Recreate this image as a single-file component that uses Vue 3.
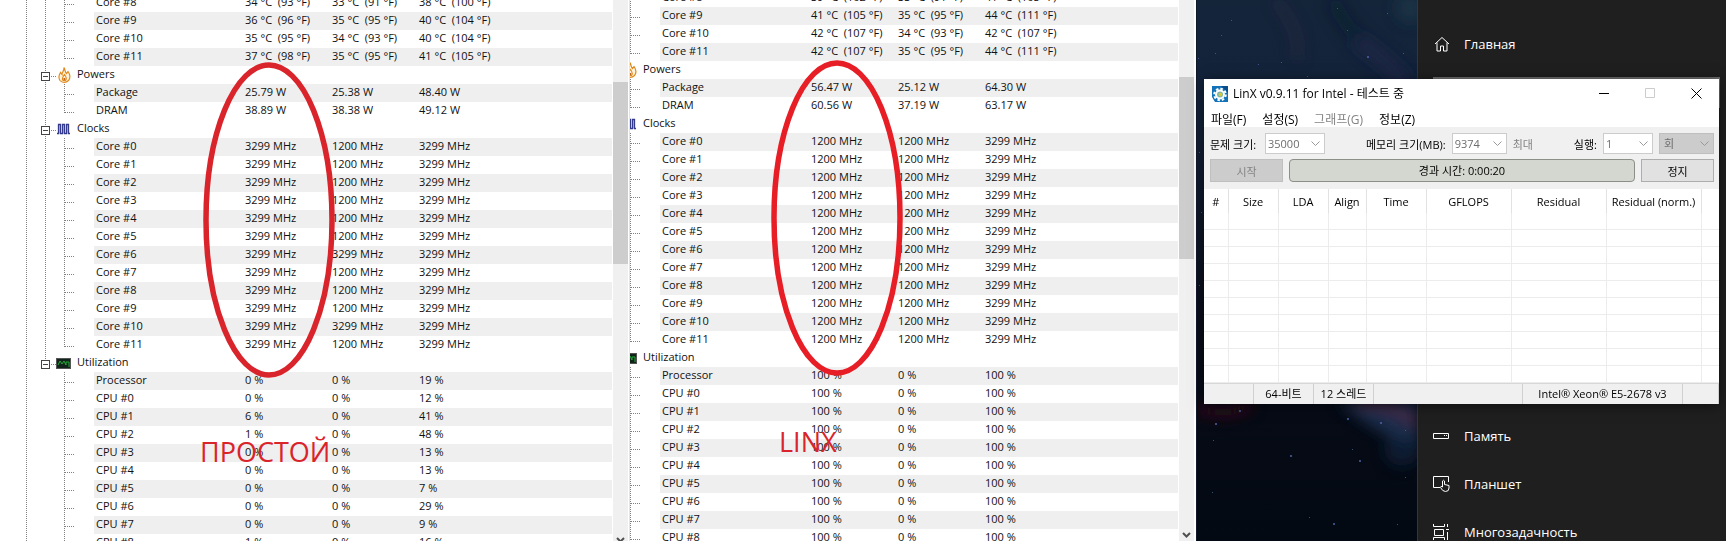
<template>
    <main class="page">
        <section class="pane" v-for="pane in panes" :key="pane.id" :class="pane.id">
            <div class="view">
                <table class="sensors">
                    <colgroup>
                        <col class="col-tree">
                        <col class="col-name">
                        <col class="col-value">
                        <col class="col-value">
                        <col>
                    </colgroup>
                    <tbody v-for="(group, groupIndex) in pane.groups" :key="groupIndex">
                        <tr v-if="group.title" class="group-row">
                            <td colspan="5">
                                <div class="group-title">
                                    <svg :width="74 - pane.crop" height="18" :viewBox="pane.crop + ' 0 ' + (74 - pane.crop) + ' 18'">
                                        <g class="guide">
                                            <path d="M26.5 0V18M51 10.5H57" />
                                            <path :d="groupIndex < pane.groups.length - 1 ? 'M45.5 0V6M45.5 16V18' : 'M45.5 0V6'" />
                                        </g>
                                        <path class="box" d="M41.5 6.5H49.5V14.5H41.5ZM43 10.5H48" />
                                        <g v-if="group.icon === 'flame'" fill="none" stroke="#e08a1e" stroke-width="1.2">
                                            <path fill="#fff3dc" d="M64 1.5C65.5 4 64.500 5.500 66.500 7.500L68 5.500C70.500 9 70.500 12 68.500 14.500C66 17 62 17 60 14.500C57.500 11 59.500 8.500 60.500 6.500L62 8.500C62 6 64.500 4.500 64 1.500Z" />
                                            <path d="M64.500 8.500C66.500 11 67 12.500 65.500 14.500H63C61.500 12.500 62.500 11 64.500 8.500Z" />
                                            <circle cx="64.300" cy="13" r="1" fill="#b85a10" stroke="none" />
                                        </g>
                                        <path v-else-if="group.icon === 'clock'" fill="#c5caf0" stroke="#343b8c" stroke-width="1.3" d="M57 13.500H58.500V4.500H60.500V13.500H62.500V4.500H64.500V13.500H66.500V4.500H68.500V13.500H70" />
                                        <g v-else>
                                            <rect x="56.500" y="4.500" width="14" height="10" fill="#10241a" stroke="#555" />
                                            <path fill="none" stroke="#25a838" d="M58 11L60 7L62 10L64 7L66 11V8H69V13" />
                                        </g>
                                    </svg>
                                    <span>{{ group.title }}</span>
                                </div>
                            </td>
                        </tr>
                        <tr v-for="(row, rowIndex) in group.rows" :key="row[0]">
                            <td class="tree-cell">
                                <svg :width="94 - pane.crop" height="18" :viewBox="pane.crop + ' 0 ' + (94 - pane.crop) + ' 18'">
                                    <g class="guide">
                                        <path d="M26.500 0V18M65 10.500H75" />
                                        <path v-if="groupIndex < pane.groups.length - 1" d="M45.500 0V18" />
                                        <path :d="rowIndex === group.rows.length - 1 && !group.open ? 'M64.500 0V11' : 'M64.500 0V18'" />
                                    </g>
                                </svg>
                            </td>
                            <td v-for="(cell, cellIndex) in row" :key="cellIndex">{{ cell }}</td>
                        </tr>
                    </tbody>
                </table>
                <div class="scrollbar">
                    <div class="thumb"></div>
                    <svg width="15" height="16" viewBox="0 0 15 16"><path fill="none" stroke="#505050" stroke-width="2" d="M4 6L7.500 9.500L11 6" /></svg>
                </div>
            </div>
            <svg class="mark" width="140" height="330" viewBox="0 0 140 330">
                <ellipse cx="70" cy="165" rx="63" ry="155" fill="none" stroke-width="5.5" />
            </svg>
            <span class="note">{{ pane.note }}</span>
        </section>

        <section class="desktop">
            <svg class="wallpaper" viewBox="0 0 220 541" preserveAspectRatio="none">
                <defs>
                    <linearGradient id="sky" x1="0" y1="0" x2="0" y2="1">
                        <stop offset="0" stop-color="#14253a" />
                        <stop offset="0.200" stop-color="#13223a" />
                        <stop offset="0.600" stop-color="#0a0d1a" />
                        <stop offset="0.760" stop-color="#060b16" />
                        <stop offset="1" stop-color="#030912" />
                    </linearGradient>
                    <filter id="haze" x="-50%" y="-50%" width="200%" height="200%">
                        <feGaussianBlur stdDeviation="7" />
                    </filter>
                </defs>
                <rect width="220" height="541" fill="url(#sky)" />
                <g filter="url(#haze)">
                    <path d="M78 0Q105 30 100 60" fill="none" stroke="#4a2a44" stroke-width="8" opacity="0.300" />
                    <path d="M135 0Q160 50 215 80" fill="none" stroke="#0a1426" stroke-width="14" opacity="0.400" />
                    <path d="M160 40Q190 60 210 85" fill="none" stroke="#2c2c54" stroke-width="14" opacity="0.600" />
                    <ellipse cx="213" cy="8" rx="14" ry="14" fill="#1d3c4c" opacity="0.600" />
                    <path d="M0 408Q30 418 55 405" fill="none" stroke="#4c1420" stroke-width="9" opacity="0.700" />
                    <path d="M140 400L220 398V445Q185 440 140 400Z" fill="#233a63" opacity="0.700" />
                    <path d="M160 402Q200 405 220 424" fill="none" stroke="#5b2b45" stroke-width="10" opacity="0.700" />
                    <ellipse cx="205" cy="450" rx="18" ry="16" fill="#0d2a42" opacity="0.600" />
                </g>
                <g fill="#5368b0" opacity="0.700">
                    <rect v-for="star in stars" :key="star.join()" :x="star[0]" :y="star[1]" :width="star[2]" :height="star[2]" />
                </g>
            </svg>
            <nav class="settings">
                <a class="nav-item" href="#home">
                    <svg width="17" height="18" viewBox="0 0 17 18"><path d="M2 9L9 2.500L16 9M4 7.500V16H7.500V11H10.500V16H14V7.500" /></svg>
                    <span>Главная</span>
                </a>
                <input class="search" type="text" aria-label="Найти параметр">
                <div class="nav-list">
                    <a class="nav-item" href="#memory">
                        <svg width="17" height="18" viewBox="0 0 17 18"><path d="M0.500 6.500H15.500V11.500H0.500ZM11 8.500H12M13 8.500H14" /></svg>
                        <span>Память</span>
                    </a>
                    <a class="nav-item" href="#tablet">
                        <svg width="17" height="18" viewBox="0 0 17 18"><path d="M7 12.500H0.500V1.500H15.500V7M9.500 12V6Q10.500 4.500 11.500 6V9.500L16 10.500V13Q16 16.500 12.500 16.500Q9.500 16.500 7.500 12.500Q7.500 10.500 9.500 12" /></svg>
                        <span>Планшет</span>
                    </a>
                    <a class="nav-item" href="#multitasking">
                        <svg width="17" height="18" viewBox="0 0 17 18"><path d="M0.500 1V3.500H11.500V1M1.500 6.500H10.500V12.500H1.500ZM0.500 17V14.500H11.500V17M14.500 1V4M14.500 9V17M13 6.500H16" /></svg>
                        <span>Многозадачность</span>
                    </a>
                </div>
            </nav>

            <div class="window">
                <header class="titlebar">
                    <svg width="16" height="16" viewBox="0 0 16 16">
                        <rect width="16" height="16" fill="#1273b8" />
                        <path d="M9 0H16V7Z" fill="#0a4f8c" />
                        <circle cx="8" cy="8.500" r="5.800" fill="none" stroke="#fff" stroke-width="2" stroke-dasharray="2.500 2" />
                        <circle cx="8" cy="8.500" r="4" fill="#7db8a8" stroke="#fff" stroke-width="2" />
                        <circle cx="8.500" cy="8.500" r="1.800" fill="#d8c832" />
                        <path d="M0 11L3 16H0Z" fill="#fff" />
                    </svg>
                    <h1>LinX v0.9.11 for Intel - 테스트 중</h1>
                    <button type="button" aria-label="최소화"><svg width="11" height="11" viewBox="0 0 11 11"><path d="M0 5.500H10" /></svg></button>
                    <button type="button" aria-label="최대화" disabled><svg width="11" height="11" viewBox="0 0 11 11"><path d="M0.500 0.500H9.500V9.500H0.500Z" /></svg></button>
                    <button type="button" aria-label="닫기"><svg width="11" height="11" viewBox="0 0 11 11"><path d="M0.500 0.500L10.500 10.500M10.500 0.500L0.500 10.500" /></svg></button>
                </header>
                <div class="menubar">
                    <button type="button" v-for="item in menu" :key="item.text" :disabled="item.disabled">{{ item.text }}</button>
                </div>
                <div class="toolbar">
                    <div class="fields">
                        <label for="size">문제 크기:</label>
                        <div class="combo combo-size">
                            <select id="size" disabled><option>35000</option></select>
                            <svg width="9" height="6" viewBox="0 0 9 6"><path d="M0.500 0.500L4.500 4.500L8.500 0.500" /></svg>
                        </div>
                        <label class="push" for="memory">메모리 크기(MB):</label>
                        <div class="combo combo-memory">
                            <select id="memory" disabled><option>9374</option></select>
                            <svg width="9" height="6" viewBox="0 0 9 6"><path d="M0.500 0.500L4.500 4.500L8.500 0.500" /></svg>
                        </div>
                        <span class="muted">최대</span>
                        <label class="push" for="runs">실행:</label>
                        <div class="combo combo-runs">
                            <select id="runs" disabled><option>1</option></select>
                            <svg width="9" height="6" viewBox="0 0 9 6"><path d="M0.500 0.500L4.500 4.500L8.500 0.500" /></svg>
                        </div>
                        <div class="combo combo-unit">
                            <select aria-label="회" disabled><option>회</option></select>
                            <svg width="9" height="6" viewBox="0 0 9 6"><path d="M0.500 0.500L4.500 4.500L8.500 0.500" /></svg>
                        </div>
                    </div>
                    <div class="actions">
                        <button type="button" disabled>시작</button>
                        <div class="elapsed">경과 시간: 0:00:20</div>
                        <button type="button">정지</button>
                    </div>
                </div>
                <table class="results">
                    <colgroup>
                        <col v-for="column in columns" :key="column.text" :style="{ width: column.width + 'px' }">
                    </colgroup>
                    <thead>
                        <tr><th v-for="column in columns" :key="column.text">{{ column.text }}</th></tr>
                    </thead>
                    <tbody>
                        <tr v-for="n in 10" :key="n"><td v-for="column in columns" :key="column.text"></td></tr>
                    </tbody>
                </table>
                <footer class="statusbar">
                    <span class="status-edge"></span>
                    <span class="status-cell">64-비트</span>
                    <span class="status-cell">12 스레드</span>
                    <span class="status-fill"></span>
                    <span class="status-cpu">Intel® Xeon® E5-2678 v3</span>
                    <span class="status-end"></span>
                </footer>
            </div>
        </section>
    </main>
</template>

<script setup>
    import { ref } from 'vue'

    // current / minimum / maximum for every core
    function clocks(current, minimums){
        return minimums.map((min, index) => ['Core #' + index, current + ' MHz', min + ' MHz', '3299 MHz'])
    }
    function loads(current, maximums){
        return maximums.map((max, index) => [
            index === 0 ? 'Processor' : 'CPU #' + (index - 1),
            current[index] + ' %',
            '0 %',
            max + ' %'
        ])
    }

    const panes = ref([
        {
            id: 'idle',
            crop: 0,
            note: 'ПРОСТОЙ',
            groups: [
                {
                    rows: [
                        ['Core #8', '34 °C  (93 °F)', '33 °C  (91 °F)', '38 °C  (100 °F)'],
                        ['Core #9', '36 °C  (96 °F)', '35 °C  (95 °F)', '40 °C  (104 °F)'],
                        ['Core #10', '35 °C  (95 °F)', '34 °C  (93 °F)', '40 °C  (104 °F)'],
                        ['Core #11', '37 °C  (98 °F)', '35 °C  (95 °F)', '41 °C  (105 °F)']
                    ]
                },
                {
                    title: 'Powers',
                    icon: 'flame',
                    rows: [
                        ['Package', '25.79 W', '25.38 W', '48.40 W'],
                        ['DRAM', '38.89 W', '38.38 W', '49.12 W']
                    ]
                },
                {
                    title: 'Clocks',
                    icon: 'clock',
                    rows: clocks(3299, [1200, 1200, 1200, 1200, 1200, 1200, 3299, 1200, 1200, 1200, 3299, 1200])
                },
                {
                    title: 'Utilization',
                    icon: 'graph',
                    open: true,
                    rows: loads([0, 0, 6, 1, 0, 0, 0, 0, 0, 1], [19, 12, 41, 48, 13, 13, 7, 29, 9, 16])
                }
            ]
        },
        {
            id: 'load',
            crop: 64,
            note: 'LINX',
            groups: [
                {
                    rows: [
                        ['Core #8', '39 °C  (102 °F)', '33 °C  (91 °F)', '41 °C  (105 °F)'],
                        ['Core #9', '41 °C  (105 °F)', '35 °C  (95 °F)', '44 °C  (111 °F)'],
                        ['Core #10', '42 °C  (107 °F)', '34 °C  (93 °F)', '42 °C  (107 °F)'],
                        ['Core #11', '42 °C  (107 °F)', '35 °C  (95 °F)', '44 °C  (111 °F)']
                    ]
                },
                {
                    title: 'Powers',
                    icon: 'flame',
                    rows: [
                        ['Package', '56.47 W', '25.12 W', '64.30 W'],
                        ['DRAM', '60.56 W', '37.19 W', '63.17 W']
                    ]
                },
                {
                    title: 'Clocks',
                    icon: 'clock',
                    rows: clocks(1200, Array(12).fill(1200))
                },
                {
                    title: 'Utilization',
                    icon: 'graph',
                    open: true,
                    rows: loads(Array(10).fill(100), Array(10).fill(100))
                }
            ]
        }
    ])

    const menu = ref([
        { text: '파일(F)' },
        { text: '설정(S)' },
        { text: '그래프(G)', disabled: true },
        { text: '정보(Z)' }
    ])

    const columns = ref([
        { text: '#', width: 24 },
        { text: 'Size', width: 50 },
        { text: 'LDA', width: 50 },
        { text: 'Align', width: 38 },
        { text: 'Time', width: 60 },
        { text: 'GFLOPS', width: 85 },
        { text: 'Residual', width: 95 },
        { text: 'Residual (norm.)', width: 95 },
        { text: '', width: 18 }
    ])

    // x, y, size
    const stars = [
        [34, 20, 1], [24, 35, 1], [18, 53, 1], [61, 64, 1], [84, 62, 1], [170, 56, 2], [140, 8, 1], [190, 13, 1],
        [206, 53, 1], [110, 76, 1], [150, 30, 1], [1, 58, 1], [42, 410, 2], [18, 423, 2], [150, 418, 2], [183, 422, 2],
        [93, 455, 2], [162, 460, 2], [208, 430, 1], [208, 477, 1], [112, 517, 1], [136, 523, 2], [155, 449, 1],
        [16, 440, 1], [2, 152, 1], [4, 212, 1], [2, 285, 1], [200, 524, 1], [15, 492, 1]
    ]
</script>

<style>
body {
    margin: 0;
    background-color: #1f1f1f;
}
</style>

<style scoped>
.page {
    display: grid;
    grid-template-columns: 630fr 567fr 529fr;
    height: 100vh;
    overflow: hidden;
    font-family: "Open Sans", "Noto Sans CJK KR", sans-serif;
    font-size: 11px;
    color: #111;
}

button, input, select {
    font: inherit;
    color: inherit;
    margin: 0;
    padding: 0;
    border: 0;
    border-radius: 0;
    box-sizing: border-box;
}

/* sensor panes */
.pane {
    position: relative;
    min-width: 0;
    overflow: hidden;
    background-color: #fff;
    border-right: 1px solid #e4e4e4;
}
.load {
    border-right-color: #10182a;
}
.view {
    display: flex;
    height: calc(100% + 13px);
    margin-top: -6px;
}
.load .view {
    margin-top: -11px;
}
.sensors {
    flex: 1;
    align-self: flex-start;
    table-layout: fixed;
    width: 0;
    border-collapse: collapse;
}
.col-tree {
    width: 94px;
}
.load .col-tree {
    width: 30px;
}
.col-name {
    width: 149px;
}
.col-value {
    width: 87px;
}
.sensors td {
    height: 18px;
    padding: 0 0 0 2px;
    line-height: 16px;
    vertical-align: top;
    white-space: pre;
}
.sensors tr:nth-child(even) td {
    background-color: #efefef;
}
.sensors .group-row td, .sensors .tree-cell {
    padding: 0;
}
.sensors tr:nth-child(even) .tree-cell {
    background-color: #fff;
}
.sensors svg {
    display: block;
    flex: none;
}
.group-title {
    display: flex;
    gap: 3px;
}
.guide {
    fill: none;
    stroke: #808080;
    stroke-dasharray: 1 1;
    shape-rendering: crispEdges;
}
.box {
    fill: #fff;
    stroke: #444;
    shape-rendering: crispEdges;
}
.scrollbar {
    display: flex;
    flex-direction: column;
    width: 15px;
    margin: 0 1px;
    background-color: #f0f0f0;
}
.load .scrollbar {
    margin-right: 2px;
}
.thumb {
    height: 182px;
    margin-top: 88px;
    margin-bottom: auto;
    background-color: #cdcdcd;
}
.mark {
    position: absolute;
    top: 55px;
    left: 199px;
    stroke: #da242b;
}
.load .mark {
    top: 53px;
    left: 137px;
    stroke: #e81e26;
}
.note {
    position: absolute;
    top: 433px;
    left: 200px;
    font-size: 27px;
    line-height: 38px;
    color: #da242b;
}
.load .note {
    top: 423px;
    left: 149px;
}

/* desktop */
.desktop {
    position: relative;
    display: grid;
    grid-template-columns: 220fr 309fr;
    min-width: 0;
}
.wallpaper {
    display: block;
    width: 100%;
    height: 100vh;
}
.settings {
    height: 100vh;
    overflow: hidden;
    box-sizing: border-box;
    padding: 20px 6px 0 15px;
    border-left: 1px solid #34363a;
    background-color: #1f1f1f;
    color: #fff;
    font-size: 13px;
}
.nav-item {
    display: flex;
    align-items: center;
    gap: 14px;
    height: 48px;
    color: inherit;
    text-decoration: none;
}
.nav-item svg {
    fill: none;
    stroke: #fff;
}
.search {
    display: block;
    width: 100%;
    height: 31px;
    margin-top: 9px;
    border: 2px solid #6b6b6b;
    background-color: #1f1f1f;
}
.nav-list {
    margin-top: 304px;
}

/* LinX window */
.window {
    position: absolute;
    top: 79px;
    left: 7px;
    right: 7px;
    background-color: #fff;
    box-shadow: 0 2px 12px rgba(0, 0, 0, 0.5);
    color: #000;
}
.titlebar {
    display: flex;
    align-items: center;
    height: 29px;
    padding-left: 8px;
}
.titlebar h1 {
    flex: 1;
    margin: 0 0 0 5px;
    font-size: 12px;
    font-weight: 400;
    line-height: 18px;
}
.titlebar button {
    display: flex;
    align-items: center;
    justify-content: center;
    width: 46px;
    height: 29px;
    background: none;
}
.titlebar button svg {
    fill: none;
    stroke: #000;
}
.titlebar button:disabled svg {
    stroke: #ccc;
}
.menubar {
    display: flex;
    gap: 16px;
    height: 17px;
    padding: 2px 0 0 7px;
    font-size: 12px;
}
.menubar button {
    background: none;
}
.menubar button:disabled, .muted {
    color: #838383;
}
.toolbar {
    padding: 6px 5px 7px 6px;
    background-color: #f0f0f0;
}
.fields {
    display: flex;
    align-items: center;
    gap: 6px;
}
.fields label:first-child {
    min-width: 49px;
}
.fields .push {
    margin-left: auto;
}
.combo {
    display: grid;
    align-items: center;
    height: 21px;
}
.combo-size {
    width: 60px;
}
.combo-memory {
    width: 55px;
}
.combo-runs {
    width: 50px;
}
.combo-unit {
    width: 55px;
}
.combo select {
    grid-area: 1 / 1;
    appearance: none;
    width: 100%;
    height: 21px;
    padding-left: 2px;
    border: 1px solid #ccc;
    background-color: #fff;
    color: #6d6d6d;
    opacity: 1;
}
.combo-unit select {
    padding-left: 4px;
    border-color: #bfbfbf;
    background-color: #ccc;
}
.combo svg {
    grid-area: 1 / 1;
    justify-self: end;
    margin-right: 5px;
    fill: none;
    stroke: #999;
}
.actions {
    display: flex;
    gap: 6px;
    margin-top: 5px;
}
.actions button {
    width: 73px;
    height: 23px;
    border: 1px solid #adadad;
    background-color: #e1e1e1;
}
.actions button:disabled {
    border-color: #bfbfbf;
    background-color: #ccc;
    color: #838383;
}
.elapsed {
    flex: 1;
    box-sizing: border-box;
    height: 23px;
    border: 1px solid #8c8f88;
    border-radius: 4px;
    background-color: #d3d7cf;
    line-height: 21px;
    text-align: center;
}
.results {
    table-layout: fixed;
    width: 100%;
    border-collapse: collapse;
}
.results th {
    height: 24px;
    padding: 0;
    border-right: 1px solid #e2e2e2;
    font-weight: 400;
    white-space: nowrap;
}
.results td {
    height: 16px;
    padding: 0;
    border-right: 1px solid #ececec;
    border-bottom: 1px solid #ececec;
}
.results th:last-child, .results td:last-child {
    border-right: 0;
}
.statusbar {
    display: flex;
    height: 20px;
    border-top: 1px solid #d7d7d7;
    background-color: #f0f0f0;
    line-height: 20px;
    text-align: center;
}
.statusbar span {
    box-sizing: border-box;
    border-right: 1px solid #d0d0d0;
}
.status-edge {
    width: 50px;
}
.status-cell {
    width: 60px;
}
.status-fill {
    flex: 1;
}
.status-cpu {
    width: 160px;
}
.status-end {
    width: 36px;
}
</style>
